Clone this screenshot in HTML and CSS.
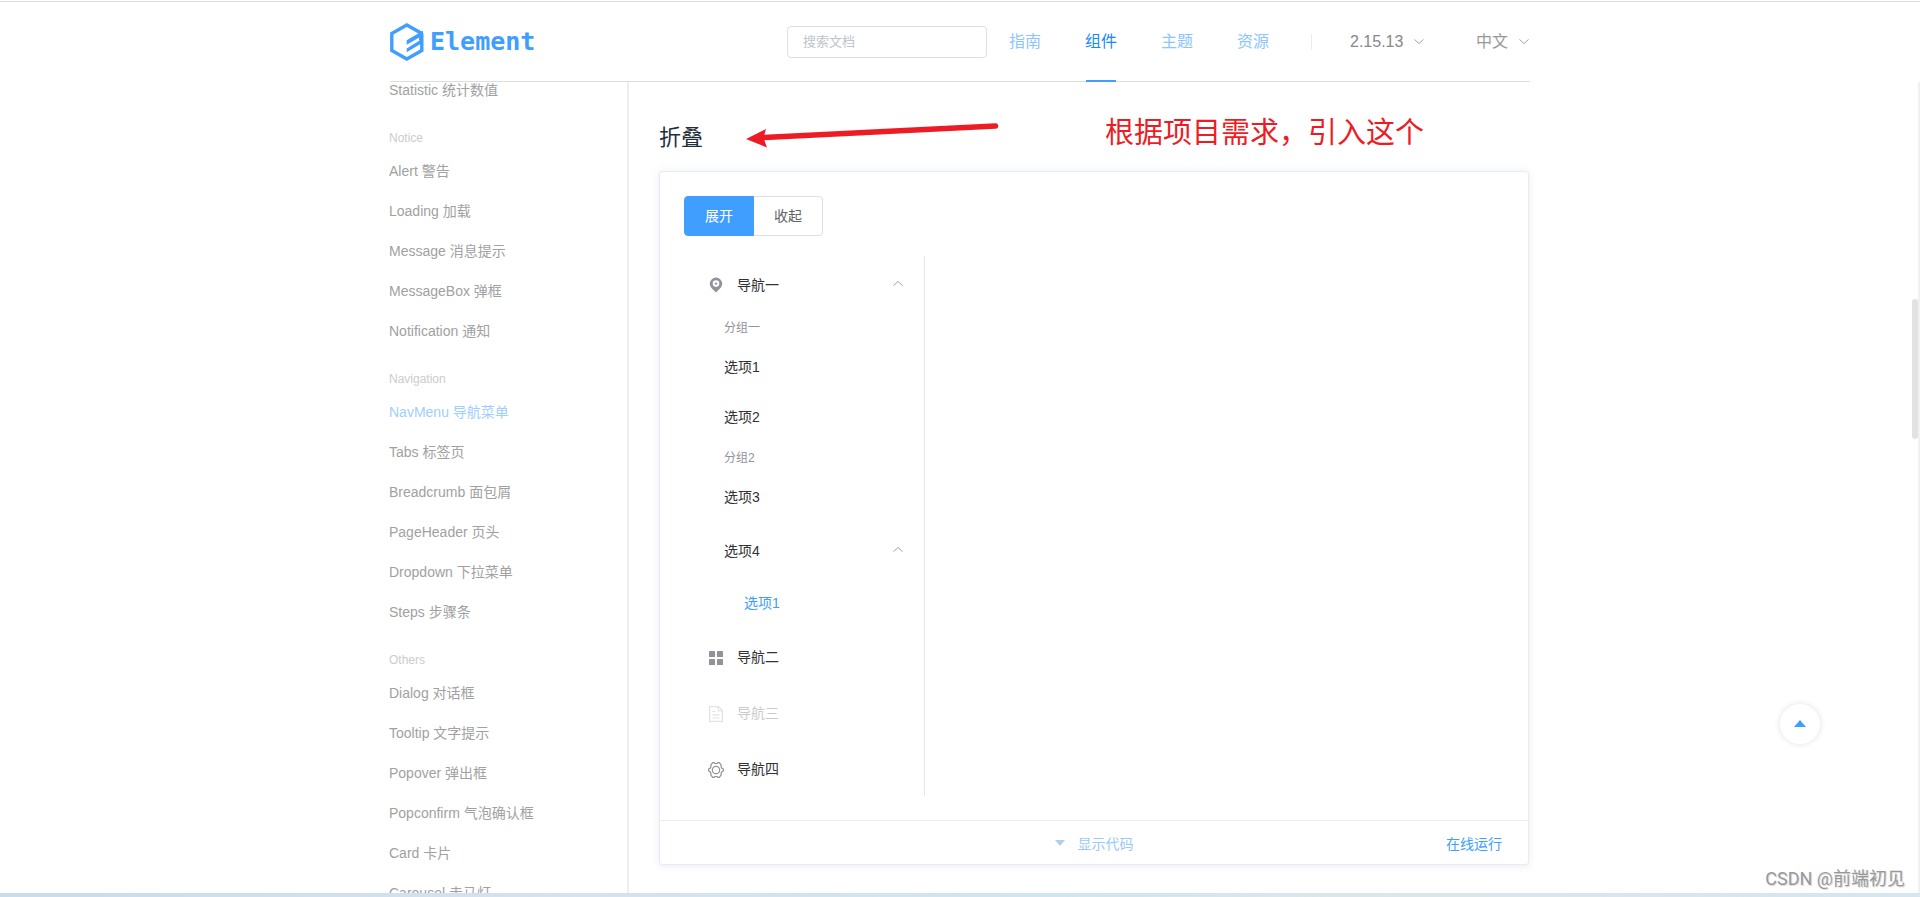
FILE: index.html
```html
<!DOCTYPE html>
<html lang="zh-CN">
<head>
<meta charset="utf-8">
<title>Element NavMenu</title>
<link rel="stylesheet" href="styles.css">
</head>
<body>
<div class="top-rule"></div>
<header class="container header">
  <a class="logo" href="#" aria-label="Element">
    <svg width="34" height="38" viewBox="0 0 34 38" aria-hidden="true">
      <path fill="none" stroke="#409eff" stroke-width="3.400" d="M31.800 10.400L16.800 2L1.800 10.400V27.600L16.800 36L31.800 27.600V10.400"/>
      <path fill="#409eff" d="M16.700 17.200L33 7.800V19.400L16.700 29.300V25.400L29.600 17.600V14.300L16.700 21.800Z"/>
      <path fill="#409eff" d="M33 8V15L29 17.500V12Z"/>
    </svg>
    <span class="wordmark">Element</span>
  </a>
  <input class="search" type="text" placeholder="搜索文档" aria-label="搜索文档">
  <nav class="nav">
    <a href="#">指南</a>
    <a href="#" class="active">组件</a>
    <a href="#">主题</a>
    <a href="#">资源</a>
  </nav>
  <span class="divider"></span>
  <div class="picker version">
    <select aria-label="版本"><option>2.15.13</option></select>
    <svg class="chev" width="12" height="12" viewBox="0 0 12 12"><path d="M1.500 3.500L6 7.500L10.500 3.500"/></svg>
  </div>
  <div class="picker lang">
    <select aria-label="语言"><option>中文</option></select>
    <svg class="chev" width="12" height="12" viewBox="0 0 12 12"><path d="M1.500 3.500L6 7.500L10.500 3.500"/></svg>
  </div>
</header>

<div class="page">
  <div class="container columns">
    <nav class="side">
      <ul>
        <li><a href="#">Statistic 统计数值</a></li>
      </ul>
      <h2>Notice</h2>
      <ul>
        <li><a href="#">Alert 警告</a></li>
        <li><a href="#">Loading 加载</a></li>
        <li><a href="#">Message 消息提示</a></li>
        <li><a href="#">MessageBox 弹框</a></li>
        <li><a href="#">Notification 通知</a></li>
      </ul>
      <h2>Navigation</h2>
      <ul>
        <li><a href="#" class="active">NavMenu 导航菜单</a></li>
        <li><a href="#">Tabs 标签页</a></li>
        <li><a href="#">Breadcrumb 面包屑</a></li>
        <li><a href="#">PageHeader 页头</a></li>
        <li><a href="#">Dropdown 下拉菜单</a></li>
        <li><a href="#">Steps 步骤条</a></li>
      </ul>
      <h2>Others</h2>
      <ul>
        <li><a href="#">Dialog 对话框</a></li>
        <li><a href="#">Tooltip 文字提示</a></li>
        <li><a href="#">Popover 弹出框</a></li>
        <li><a href="#">Popconfirm 气泡确认框</a></li>
        <li><a href="#">Card 卡片</a></li>
        <li><a href="#">Carousel 走马灯</a></li>
      </ul>
    </nav>

    <main class="content">
      <h1>折叠</h1>
      <svg class="note-arrow" width="260" height="32" viewBox="0 0 260 32" aria-hidden="true">
        <path d="M19 17.500L250.500 6" stroke="#ed1c24" stroke-width="5.500" stroke-linecap="round"/>
        <path d="M1 19L21 9L18.500 18L22 27.500Z" fill="#ed1c24"/>
      </svg>
      <p class="note">根据项目需求，引入这个</p>

      <section class="card">
        <div class="demo">
          <div class="toggle">
            <button type="button" class="on">展开</button>
            <button type="button">收起</button>
          </div>
          <ul class="menu">
            <li>
              <a class="row top" href="#">
                <svg class="icon" width="24" height="20" viewBox="0 0 24 20"><path fill="#909399" fill-rule="evenodd" d="M12 18.500C9.500 16 5.800 13.500 5.800 9.800A6.200 6.200 0 0 1 18.200 9.800C18.200 13.500 14.500 16 12 18.500ZM12 6.300A3.300 3.300 0 1 0 12 12.900A3.300 3.300 0 1 0 12 6.300Z"/><circle cx="12" cy="9.600" r="1.200" fill="#909399"/></svg>
                <span>导航一</span>
                <svg class="chev end" width="12" height="12" viewBox="0 0 12 12"><path d="M1.500 7.500L6 3.500L10.500 7.500"/></svg>
              </a>
              <h3>分组一</h3>
              <a class="row item" href="#">选项1</a>
              <a class="row item" href="#">选项2</a>
              <h3>分组2</h3>
              <a class="row item" href="#">选项3</a>
              <a class="row top nested" href="#">
                <span>选项4</span>
                <svg class="chev end" width="12" height="12" viewBox="0 0 12 12"><path d="M1.500 7.500L6 3.500L10.500 7.500"/></svg>
              </a>
              <a class="row item deep" href="#">选项1</a>
            </li>
            <li>
              <a class="row top" href="#">
                <svg class="icon" width="24" height="20" viewBox="0 0 24 20" fill="#909399"><rect x="5" y="5" width="6" height="6" rx=".5"/><rect x="13" y="5" width="6" height="6" rx=".5"/><rect x="5" y="13" width="6" height="6" rx=".5"/><rect x="13" y="13" width="6" height="6" rx=".5"/></svg>
                <span>导航二</span>
              </a>
            </li>
            <li>
              <a class="row top disabled" aria-disabled="true">
                <svg class="icon" width="24" height="20" viewBox="0 0 24 20" fill="none" stroke="#909399" stroke-width="1.200"><path d="M5.600 4.600H14.500L18.400 8.800V19.400H5.600ZM14.300 4.800V9H18.200M8.500 9.500H11.500M8.500 12.800H15.500M8.500 16H15.500"/></svg>
                <span>导航三</span>
              </a>
            </li>
            <li>
              <a class="row top" href="#">
                <svg class="icon" width="24" height="20" viewBox="0 0 24 20" fill="none" stroke="#909399" stroke-width="1.200" stroke-linejoin="round"><path d="M8.600 4.700H10.200L11 5.500H13L13.800 4.700H15.400L17.300 7.300L17 8.700L18 10.400L19.400 11V13L18 13.600L17 15.300L17.300 16.700L15.400 19.300H13.800L13 18.500H11L10.200 19.300H8.600L6.700 16.700L7 15.300L6 13.600L4.600 13V11L6 10.400L7 8.700L6.700 7.300Z"/><circle cx="12" cy="12" r="3.700"/></svg>
                <span>导航四</span>
              </a>
            </li>
          </ul>
        </div>
        <div class="control">
          <button type="button" class="show">
            <svg width="10" height="6" viewBox="0 0 10 6"><path d="M0 0H10L5 6Z" fill="#b0cfee"/></svg>
            显示代码
          </button>
          <button type="button" class="run">在线运行</button>
        </div>
      </section>
    </main>
  </div>
  <div class="track"></div>
  <div class="thumb"></div>
  <button type="button" class="to-top" aria-label="回到顶部">
    <svg width="12" height="7" viewBox="0 0 12 7"><path d="M6 0L12 7H0Z" fill="#409eff"/></svg>
  </button>
  <div class="watermark">CSDN @前端初见</div>
</div>
<div class="bottom-strip"></div>
</body>
</html>
```
FILE: styles.css
```css
* {
  box-sizing: border-box;
}

body {
  margin: 0;
  height: 100vh;
  overflow: hidden;
  display: flex;
  flex-direction: column;
  background: #fff;
  color: #303133;
  font-family: "Liberation Sans", "Noto Sans CJK SC", sans-serif;
  font-size: 14px;
}

a {
  color: inherit;
  text-decoration: none;
}

ul {
  list-style: none;
  margin: 0;
  padding: 0;
}

h1,
h2,
h3,
p {
  margin: 0;
  font-weight: 400;
}

button,
input,
select {
  font-family: inherit;
  font-size: 14px;
  margin: 0;
}

button {
  cursor: pointer;
}

.container {
  width: 100%;
  max-width: 1140px;
  margin: 0 auto;
}

.top-rule {
  flex: none;
  height: 2px;
  border-bottom: 1px solid #dcdfe0;
}

.header {
  flex: none;
  height: 80px;
  display: flex;
  align-items: center;
  border-bottom: 1px solid #dcdfe0;
}

.logo {
  display: flex;
  align-items: center;
  gap: 6px;
  margin-right: auto;
}

.wordmark {
  color: #409eff;
  font: bold 25px/30px "DejaVu Sans Mono", monospace;
}

.search {
  width: 200px;
  height: 32px;
  padding: 0 15px;
  border: 1px solid #dcdfe6;
  border-radius: 4px;
  font-size: 13px;
}

.search::placeholder {
  color: #c0c4cc;
}

.nav {
  display: flex;
  align-self: stretch;
}

.nav a {
  height: 80px;
  padding: 0 22px;
  line-height: 80px;
  font-size: 16px;
  color: #8cc5ff;
  position: relative;
}

.nav .active {
  color: #1989fa;
}

.nav .active::after {
  content: "";
  position: absolute;
  left: 23px;
  right: 23px;
  bottom: 0;
  height: 2px;
  background: #409eff;
}

.divider {
  width: 1px;
  height: 16px;
  margin: 0 38px 0 20px;
  background: #ebebeb;
}

.picker {
  display: flex;
  align-items: center;
  color: #888;
}

.picker select {
  appearance: none;
  border: 0;
  padding: 0;
  background: none;
  color: inherit;
  font-size: 16px;
}

.version {
  gap: 9px;
  margin-right: 51px;
}

.lang {
  gap: 9px;
  color: #999;
}

.chev {
  flex: none;
  fill: none;
  stroke: #a0a3a8;
  stroke-width: 1;
}

.page {
  flex: 1;
  min-height: 0;
  position: relative;
  overflow: hidden;
  padding-right: 2px;
}

.columns {
  height: 100%;
  display: flex;
}

.side {
  flex: none;
  width: 240px;
  overflow: hidden;
  border-right: 2px solid #eee;
}

.side ul:first-child {
  margin-top: -12px;
}

.side a {
  display: block;
  height: 40px;
  line-height: 40px;
  color: #a1a1a1;
}

.side .active {
  color: #9fceff;
}

.side h2 {
  margin-top: 15px;
  font-size: 12px;
  line-height: 26px;
  color: #ccc;
}

.content {
  flex: 1;
  position: relative;
  margin-left: 30px;
  padding-top: 41px;
}

.content h1 {
  margin-bottom: 18px;
  font-size: 22px;
  line-height: 30px;
  color: #1f2f3d;
}

/* Hand-drawn annotations over the heading row */
.note-arrow {
  position: absolute;
  left: 86px;
  top: 38px;
}

.note {
  position: absolute;
  left: 446px;
  top: 31px;
  font-size: 29px;
  line-height: 40px;
  color: #ed1c24;
  white-space: nowrap;
}

.card {
  border: 1px solid #ebebeb;
  border-radius: 3px;
  box-shadow: 0 0 8px rgba(232, 237, 250, .6), 0 2px 4px rgba(232, 237, 250, .5);
}

.demo {
  padding: 24px;
}

.toggle {
  display: flex;
  margin-bottom: 20px;
}

.toggle button {
  height: 40px;
  padding: 0 20px 2px;
  border: 1px solid #dcdfe6;
  border-radius: 0 4px 4px 0;
  margin-left: -1px;
  background: #fff;
  color: #606266;
}

.toggle .on {
  position: relative;
  margin-left: 0;
  border-color: #409eff;
  border-radius: 4px 0 0 4px;
  background: #409eff;
  color: #fff;
}

.menu {
  width: 241px;
  border-right: 1px solid #e6e6e6;
}

.row {
  display: flex;
  align-items: center;
  padding: 0 20px;
}

.top {
  height: 56px;
}

.item {
  height: 50px;
  padding: 0 20px 2px 40px;
}

.nested {
  padding-left: 40px;
}

.deep {
  padding-left: 60px;
  color: #409eff;
}

.icon {
  margin-right: 9px;
}

.end {
  margin-left: auto;
}

.disabled {
  opacity: .25;
}

.menu h3 {
  height: 30px;
  padding-left: 40px;
  font-size: 12px;
  line-height: 32px;
  color: #909399;
}

.control {
  height: 44px;
  display: grid;
  grid-template-columns: 1fr auto 1fr;
  align-items: center;
  border-top: 1px solid #eaeefb;
}

.control button {
  border: 0;
  padding: 0;
  background: none;
  color: #409eff;
}

.control .show {
  grid-column: 2;
  display: flex;
  align-items: center;
  gap: 13px;
  color: #9bcaf9;
}

.control .run {
  justify-self: end;
  margin-right: 26px;
}

.track {
  position: absolute;
  top: 0;
  right: 0;
  bottom: 0;
  width: 2px;
  background: #f1f1f1;
}

.thumb {
  position: absolute;
  top: 217px;
  right: 2px;
  width: 6px;
  height: 140px;
  border-radius: 3px;
  background: #e0e2e4;
}

.to-top {
  position: absolute;
  right: 100px;
  bottom: 149px;
  width: 40px;
  height: 40px;
  display: flex;
  align-items: center;
  justify-content: center;
  padding: 0 0 2px;
  border: 0;
  border-radius: 50%;
  background: #fff;
  box-shadow: 0 0 6px rgba(0, 0, 0, .12);
}

.watermark {
  position: absolute;
  right: 15px;
  bottom: 2px;
  font-family: Roboto, "Noto Sans CJK SC", sans-serif;
  font-size: 18px;
  line-height: 24px;
  color: #999;
  text-shadow: 1px 1px 0 #ddd;
}

.bottom-strip {
  flex: none;
  height: 4px;
  background: linear-gradient(90deg, #c9dcec, #d5e2f0 30%, #cfe5ef 55%, #dce6ea 70%, #d5e6ef);
}
```
